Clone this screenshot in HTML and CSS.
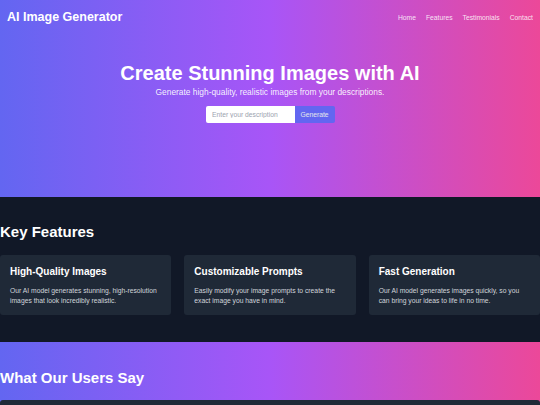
FILE: index.html
```html
<!DOCTYPE html>
<html lang="en">

<head>
    <meta charset="UTF-8">
    <meta name="viewport" content="width=device-width, initial-scale=1.0">
    <title>AI Image Generator</title>
    <link rel="stylesheet" href="styles.css">
</head>

<body>
    <section class="hero">
        <header class="topbar">
            <div class="brand">AI Image Generator</div>
            <nav class="nav">
                <a href="#">Home</a>
                <a href="#features">Features</a>
                <a href="#testimonials">Testimonials</a>
                <a href="#">Contact</a>
            </nav>
        </header>

        <div class="hero-content">
            <h1>Create Stunning Images with AI</h1>
            <p class="lead">Generate high-quality, realistic images from your descriptions.</p>
            <form class="prompt-form">
                <input type="text" placeholder="Enter your description" aria-label="Description">
                <button type="submit">Generate</button>
            </form>
        </div>
    </section>

    <section class="features" id="features">
        <h2>Key Features</h2>
        <div class="feature-grid">
            <div class="card">
                <h3>High-Quality Images</h3>
                <p>Our AI model generates stunning, high-resolution images that look incredibly realistic.</p>
            </div>
            <div class="card">
                <h3>Customizable Prompts</h3>
                <p>Easily modify your image prompts to create the exact image you have in mind.</p>
            </div>
            <div class="card">
                <h3>Fast Generation</h3>
                <p>Our AI model generates images quickly, so you can bring your ideas to life in no time.</p>
            </div>
        </div>
    </section>

    <section class="testimonials" id="testimonials">
        <h2>What Our Users Say</h2>
        <div class="quote-card"></div>
    </section>
</body>

</html>
```

FILE: styles.css
```css
body {
    margin: 0;
    padding: 0;
    font-family: 'Liberation Sans', Arial, sans-serif;
    background-color: #111827;
    color: #ffffff;
}

.hero,
.testimonials {
    background: linear-gradient(90deg, #6366f1, #a855f7, #ec4899);
}

.hero {
    height: 197px;
}

.topbar {
    display: flex;
    justify-content: space-between;
    align-items: center;
    padding: 8px 7px;
}

.brand {
    font-size: 12.5px;
    font-weight: bold;
    line-height: 18px;
}

.nav {
    display: flex;
    gap: 10px;
}

.nav a {
    color: rgba(255, 255, 255, 0.85);
    text-decoration: none;
    font-size: 6.75px;
}

.hero-content {
    text-align: center;
}

.hero-content h1 {
    margin: 27px 0 1px;
    font-size: 20px;
    line-height: 24px;
}

.lead {
    margin: 0 0 8px;
    font-size: 8.4px;
    line-height: 12px;
    color: rgba(255, 255, 255, 0.92);
}

.prompt-form {
    display: flex;
    justify-content: center;
}

.prompt-form input {
    width: 89px;
    height: 17px;
    box-sizing: border-box;
    border: none;
    border-radius: 2px 0 0 2px;
    padding: 0 6.5px;
    font-family: inherit;
    font-size: 6.75px;
    color: #374151;
    background-color: #ffffff;
}

.prompt-form input::placeholder {
    color: #9ca3af;
}

.prompt-form button {
    height: 17px;
    width: 40px;
    border: none;
    border-radius: 0 2px 2px 0;
    padding: 0;
    background-color: #6366f1;
    color: #e5e7eb;
    font-family: inherit;
    font-size: 6.75px;
    cursor: pointer;
}

.features {
    padding: 26px 0 27px;
    background-color: #111827;
}

.features h2,
.testimonials h2 {
    margin: 0;
    font-size: 15px;
    line-height: 18px;
}

.feature-grid {
    display: grid;
    grid-template-columns: repeat(3, 1fr);
    gap: 13px;
    margin-top: 14px;
}

.card {
    background-color: #1f2937;
    border-radius: 3px;
    padding: 10px;
    height: 60px;
    box-sizing: border-box;
}

.card h3 {
    margin: 0 0 8px;
    font-size: 10px;
    line-height: 13px;
}

.card p {
    margin: 0;
    font-size: 6.75px;
    line-height: 10px;
    color: #d1d5db;
}

.testimonials {
    padding-top: 27px;
    height: 120px;
}

.quote-card {
    margin-top: 13px;
    background-color: #1f2937;
    border-radius: 3px;
    height: 60px;
}
```
